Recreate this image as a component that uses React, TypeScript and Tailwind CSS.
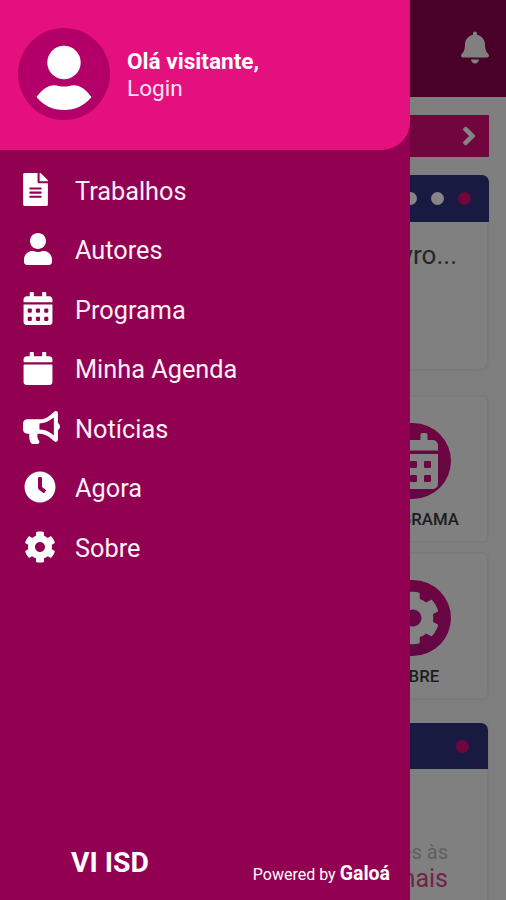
import type { IconType } from 'react-icons';
import {
  FaBell,
  FaBullhorn,
  FaCalendar,
  FaCalendarAlt,
  FaChevronRight,
  FaClock,
  FaCog,
  FaFileAlt,
  FaUser,
} from 'react-icons/fa';

interface MenuItem {
  label: string;
  icon: IconType;
  iconClass: string;
}

const menuItems: MenuItem[] = [
  { label: 'Trabalhos', icon: FaFileAlt, iconClass: 'w-[25px] h-[33px]' },
  { label: 'Autores', icon: FaUser, iconClass: 'w-[30px] h-[32px]' },
  { label: 'Programa', icon: FaCalendarAlt, iconClass: 'w-[30px] h-[33px]' },
  { label: 'Minha Agenda', icon: FaCalendar, iconClass: 'w-[30px] h-[33px]' },
  { label: 'Notícias', icon: FaBullhorn, iconClass: 'w-[37px] h-[33px]' },
  { label: 'Agora', icon: FaClock, iconClass: 'ml-px w-[32px] h-[32px]' },
  { label: 'Sobre', icon: FaCog, iconClass: 'ml-px w-[32px] h-[32px]' },
];

function Avatar() {
  return (
    <svg viewBox="0 0 92 92" className="w-[92px] h-[92px] shrink-0">
      <circle cx="46" cy="46" r="46" fill="#b30068" />
      <circle cx="46" cy="34.5" r="16.7" fill="#fff" />
      <path
        d="M18.5 69C24 61.5 30 57.2 36 57.2C39.5 57.2 42 58.6 46 58.6C50 58.6 52.5 57.2 56 57.2C62 57.2 68 61.5 73.5 69C67 77.5 57 82 46 82C35 82 25 77.5 18.5 69Z"
        fill="#fff"
      />
    </svg>
  );
}

function Drawer() {
  return (
    <aside className="w-[410px] h-full shrink-0 flex flex-col bg-[#920052] text-white">
      <div className="h-[150px] shrink-0 flex items-center gap-[17px] pl-[18px] pb-[2px] rounded-br-[28px] bg-[#e3107e]">
        <Avatar />
        <div className="pt-px text-[22.6px] leading-[27px]">
          <div className="font-bold">Olá visitante,</div>
          <div className="text-[#ffe3f1]">Login</div>
        </div>
      </div>

      <nav className="flex-1 pt-[10px]">
        {menuItems.map(({ label, icon: Icon, iconClass }) => (
          <div key={label} className="h-[59.5px] flex items-center pl-[23px]">
            <div className="w-[52px]">
              <Icon className={iconClass} />
            </div>
            <span className="text-[25.3px] leading-none pt-[3px] text-[#fff0f6]">{label}</span>
          </div>
        ))}
      </nav>

      <div className="flex items-end justify-between pl-[71px] pr-[20px] pb-[13px]">
        <span className="mb-[4px] text-[28.3px] leading-[40px] font-bold">VI ISD</span>
        <div className="flex items-baseline gap-[4px] leading-[24px]">
          <span className="text-[16px]">Powered by</span>
          <span className="text-[19.5px] font-bold">Galoá</span>
        </div>
      </div>
    </aside>
  );
}

function ShortcutCard({ label, icon: Icon, iconClass }: MenuItem) {
  return (
    <div className="w-[152px] h-[148px] shrink-0 flex flex-col items-center pt-[26px] rounded-[6px] border-2 border-[#7a7a7a] bg-[#808080]">
      <div className="size-[76px] shrink-0 flex items-center justify-center rounded-full bg-linear-to-b from-[#6f0442] to-[#620844]">
        <Icon className={`${iconClass} text-[#838383]`} />
      </div>
      <span className="mt-[9px] text-[16.8px] leading-[22px] font-medium text-[#1c1c1c]">{label}</span>
    </div>
  );
}

// Home screen behind the drawer, already dimmed; content is anchored to the right edge
function Home() {
  return (
    <main className="flex-1 min-w-0 h-full overflow-hidden flex flex-col bg-[#7e7e7e]">
      <header className="h-[97px] shrink-0 flex items-center justify-end pr-[17px] pb-[2px] bg-[#490029]">
        <FaBell className="w-[28px] h-[33px] text-[#808080]" />
      </header>

      <div className="flex-1 flex flex-col items-end pr-[17px]">
        <div className="w-[460px] h-[42px] shrink-0 mt-[18px] flex items-center justify-end pr-[12px] bg-[#71063f]">
          <FaChevronRight className="w-[16px] h-[20px] text-[#858585] stroke-[#858585] stroke-[40px]" />
        </div>

        <section className="w-[460px] h-[196px] shrink-0 mt-[18px] rounded-[8px] shadow-[inset_-2px_-2px_0_#7a7a7a] bg-[#808080]">
          <div className="h-[47px] flex items-center justify-end gap-[14px] pr-[18px] rounded-tr-[7px] bg-[#181a42]">
            <span className="size-[13px] rounded-full bg-[#858585]" />
            <span className="size-[13px] rounded-full bg-[#858585]" />
            <span className="size-[13px] rounded-full bg-[#71063f]" />
          </div>
          <p className="pt-[16px] pr-[32px] text-right text-[26px] leading-[34px] text-[#262626]">Livro...</p>
        </section>

        <div className="mt-[24px] flex flex-col gap-[9px]">
          <ShortcutCard label="PROGRAMA" icon={FaCalendarAlt} iconClass="w-[49px] h-[56px]" />
          <ShortcutCard label="SOBRE" icon={FaCog} iconClass="w-[54px] h-[56px]" />
        </div>

        <section className="w-[460px] flex-1 mt-[23px] shadow-[inset_-2px_0_0_#7a7a7a] bg-[#808080]">
          <div className="h-[46px] mr-px flex items-center justify-end pr-[19px] rounded-tr-[7px] bg-[#181a42]">
            <span className="size-[13px] rounded-full bg-[#71063f]" />
          </div>
          <div className="pt-[69px] pr-[41px] text-right">
            <p className="text-[20px] leading-[28px] text-[#5f5f5f]">sessões às</p>
            <p className="text-[25px] leading-[26px] text-[#71234a]">mais</p>
          </div>
        </section>
      </div>
    </main>
  );
}

export default function App() {
  return (
    <div className="w-[506px] h-[900px] flex overflow-hidden font-['Roboto',sans-serif]">
      <Drawer />
      <Home />
    </div>
  );
}
